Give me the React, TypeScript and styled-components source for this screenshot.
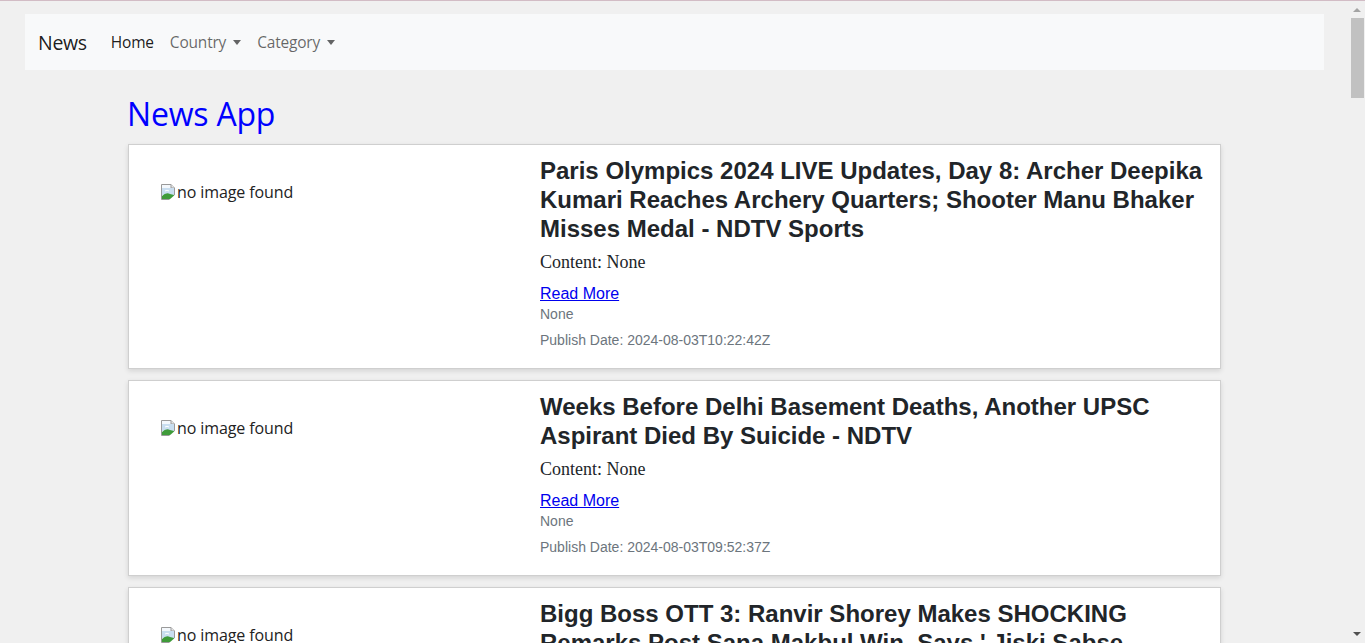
import React from "react";
import styled, { createGlobalStyle } from "styled-components";

const GlobalStyle = createGlobalStyle`
  html::-webkit-scrollbar {
    display: none;
  }
  html {
    scrollbar-width: none;
  }
  body {
    margin: 0;
    background: #f0f0f0;
    border-top: 1px solid #d2bcc5;
    font-family: "Open Sans", "Noto Sans", sans-serif;
  }
`;

const Page = styled.div`
  padding: 13px 41px 0 25px;
`;

const ScrollBar = styled.div`
  position: fixed;
  top: 1px;
  right: 0;
  bottom: 0;
  width: 17px;
  background: #f0f0f0;
  display: flex;
  flex-direction: column;
  align-items: center;
`;

const Arrow = styled.div<{ $down?: boolean }>`
  width: 0;
  height: 0;
  border-left: 4px solid transparent;
  border-right: 4px solid transparent;
  ${(p) =>
    p.$down
      ? `border-top: 4px solid #505050; margin-top: auto; margin-bottom: 7px;`
      : `border-bottom: 4px solid #a3a3a3; margin-top: 7px;`}
`;

const Thumb = styled.div`
  width: 13px;
  height: 80px;
  margin-top: 6px;
  margin-left: 2px;
  background: #c1c1c1;
`;

const NavBar = styled.nav`
  display: flex;
  align-items: center;
  height: 56px;
  padding: 0 13px;
  background: #f8f9fa;
`;

const Brand = styled.a`
  font-size: 19.5px;
  color: rgba(0, 0, 0, 0.9);
  margin-right: 16px;
  text-decoration: none;
  letter-spacing: -0.3px;
`;

const NavList = styled.ul`
  display: flex;
  list-style: none;
  margin: 0;
  padding: 0;
`;

const NavLink = styled.a<{ $active?: boolean; $dropdown?: boolean }>`
  display: flex;
  align-items: center;
  padding: 8px 8px;
  font-size: 15.5px;
  letter-spacing: -0.2px;
  text-decoration: none;
  color: ${(p) => (p.$active ? "rgba(0,0,0,0.9)" : "rgba(0,0,0,0.6)")};
  ${(p) =>
    p.$dropdown &&
    `
    &::after {
      content: "";
      display: inline-block;
      margin-left: 7px;
      border-top: 5px solid rgba(0,0,0,0.6);
      border-left: 4.5px solid transparent;
      border-right: 4.5px solid transparent;
    }
  `}
`;

const Container = styled.main`
  width: 1093px;
  margin: 0 auto;
`;

const Heading = styled.h1`
  margin: 25px 0 11px -1px;
  font-size: 32px;
  font-weight: 400;
  line-height: 38px;
  color: #0000ff;
  letter-spacing: -0.2px;
`;

const Card = styled.article`
  display: grid;
  grid-template-columns: 411px 1fr;
  background: #fff;
  border: 1px solid #cfcfcf;
  box-shadow: 0 2px 5px rgba(0, 0, 0, 0.12);
  margin-bottom: 11px;
`;

const ImageCell = styled.div`
  padding: 36px 0 0 32px;
`;

const BrokenImage = styled.span`
  display: inline-flex;
  align-items: flex-end;
  font-size: 16px;
  color: #222;
  letter-spacing: -0.1px;
  line-height: 22px;

  svg {
    margin-bottom: 3px;
    flex: none;
  }
`;

const Body = styled.div`
  padding: 11px 16px 20px 0;
`;

const Title = styled.h2`
  margin: 0 0 7px;
  font-family: "Liberation Sans", Arial, sans-serif;
  font-weight: 700;
  font-size: 24px;
  line-height: 29px;
  color: #212529;
`;

const Content = styled.p`
  margin: 0 0 11px;
  font-family: "Liberation Serif", "Times New Roman", serif;
  font-size: 18px;
  line-height: 24px;
  color: #212529;
`;

const ReadMore = styled.a`
  display: block;
  margin-bottom: 3px;
  font-family: "Liberation Sans", Arial, sans-serif;
  font-size: 16px;
  line-height: 18px;
  color: #0000ee;
  text-decoration: underline;
`;

const Meta = styled.div<{ $gap?: number }>`
  font-family: "Liberation Sans", Arial, sans-serif;
  font-size: 14px;
  line-height: 16px;
  color: #6c757d;
  margin-top: ${(p) => p.$gap ?? 0}px;
`;

const BrokenIcon = () => (
  <svg width="16" height="16" viewBox="0 0 16 16">
    <path d="M0.5 0.5 H10 L13.5 4 V15.5 H0.5 Z" fill="#f4f8fc" stroke="#9a9a9a" />
    <path d="M10 0.5 V4 H13.5" fill="#e6e6e6" stroke="#9a9a9a" />
    <rect x="1" y="4" width="12" height="7" fill="#c9def0" />
    <path d="M1 15 V12 Q5 8 9 10 L13 11 V15 Z" fill="#3f9b3a" />
    <path d="M4 7 Q6 5.5 8 7" stroke="#fff" fill="none" strokeWidth="1" />
    <path d="M8 16 L16 9 V16 Z" fill="#fff" />
  </svg>
);

type Article = { title: string; date: string };

const articles: Article[] = [
  {
    title:
      "Paris Olympics 2024 LIVE Updates, Day 8: Archer Deepika Kumari Reaches Archery Quarters; Shooter Manu Bhaker Misses Medal - NDTV Sports",
    date: "2024-08-03T10:22:42Z",
  },
  {
    title:
      "Weeks Before Delhi Basement Deaths, Another UPSC Aspirant Died By Suicide - NDTV",
    date: "2024-08-03T09:52:37Z",
  },
  {
    title:
      "Bigg Boss OTT 3: Ranvir Shorey Makes SHOCKING Remarks Post Sana Makbul Win, Says ' Jiski Sabse Zyaada Fan Following Hai... - ABP Live",
    date: "2024-08-03T09:41:10Z",
  },
  {
    title: "Wayanad Landslide: Rescue Operations Enter Fifth Day As Death Toll Rises - India Today",
    date: "2024-08-03T09:30:00Z",
  },
  {
    title: "Sensex, Nifty Extend Losses Amid Weak Global Cues - The Economic Times",
    date: "2024-08-03T09:12:45Z",
  },
  {
    title: "ISRO Gears Up For Next Launch From Sriharikota - Hindustan Times",
    date: "2024-08-03T08:55:21Z",
  },
  {
    title: "Monsoon Update: IMD Issues Heavy Rain Alert For Several States - Mint",
    date: "2024-08-03T08:40:02Z",
  },
  {
    title: "India vs Sri Lanka 2nd ODI: Probable Playing XI And Pitch Report - CricTracker",
    date: "2024-08-03T08:21:19Z",
  },
  {
    title: "New Study Links Daily Walking To Lower Risk Of Heart Disease - News18",
    date: "2024-08-03T08:05:50Z",
  },
  {
    title: "Samsung Galaxy Launch Event: Everything Announced - Gadgets 360",
    date: "2024-08-03T07:48:33Z",
  },
  {
    title: "Stock Market Today: Key Things To Know Before Markets Open - Moneycontrol",
    date: "2024-08-03T07:30:12Z",
  },
  {
    title: "Heavy Traffic Expected In Mumbai As Rains Continue - Free Press Journal",
    date: "2024-08-03T07:14:08Z",
  },
  {
    title: "Parliament Monsoon Session: Opposition Walks Out Over Key Bill - The Hindu",
    date: "2024-08-03T06:59:41Z",
  },
  {
    title: "Box Office Collection: New Release Crosses Milestone In First Week - Pinkvilla",
    date: "2024-08-03T06:40:27Z",
  },
  {
    title: "Scientists Discover New Species In Western Ghats - Down To Earth",
    date: "2024-08-03T06:22:16Z",
  },
  {
    title: "Petrol, Diesel Prices Today: Check Rates In Your City - Zee Business",
    date: "2024-08-03T06:01:55Z",
  },
  {
    title: "Olympics Hockey: India Face Australia In Crucial Group Match - Sportstar",
    date: "2024-08-03T05:45:30Z",
  },
  {
    title: "Gold Rate Today: Prices Steady Ahead Of Festive Season - Business Standard",
    date: "2024-08-03T05:20:11Z",
  },
  {
    title: "Delhi Metro Announces Extended Timings For Weekend - NDTV",
    date: "2024-08-03T05:02:48Z",
  },
  {
    title: "WHO Issues Advisory On Rising Cases Of Seasonal Flu - Times Now",
    date: "2024-08-03T04:44:09Z",
  },
];

const NewsCard = ({ article }: { article: Article }) => (
  <Card>
    <ImageCell>
      <BrokenImage>
        <BrokenIcon />
        no image found
      </BrokenImage>
    </ImageCell>
    <Body>
      <Title>{article.title}</Title>
      <Content>Content: None</Content>
      <ReadMore href="#">Read More</ReadMore>
      <Meta>None</Meta>
      <Meta $gap={10}>Publish Date: {article.date}</Meta>
    </Body>
  </Card>
);

export default function App() {
  return (
    <>
      <GlobalStyle />
      <Page>
        <NavBar>
          <Brand href="#">News</Brand>
          <NavList>
            <li>
              <NavLink href="#" $active>
                Home
              </NavLink>
            </li>
            <li>
              <NavLink href="#" $dropdown>
                Country
              </NavLink>
            </li>
            <li>
              <NavLink href="#" $dropdown>
                Category
              </NavLink>
            </li>
          </NavList>
        </NavBar>
        <Container>
          <Heading>News App</Heading>
          {articles.map((a) => (
            <NewsCard key={a.date} article={a} />
          ))}
        </Container>
      </Page>
      <ScrollBar aria-hidden>
        <Arrow />
        <Thumb />
        <Arrow $down />
      </ScrollBar>
    </>
  );
}
